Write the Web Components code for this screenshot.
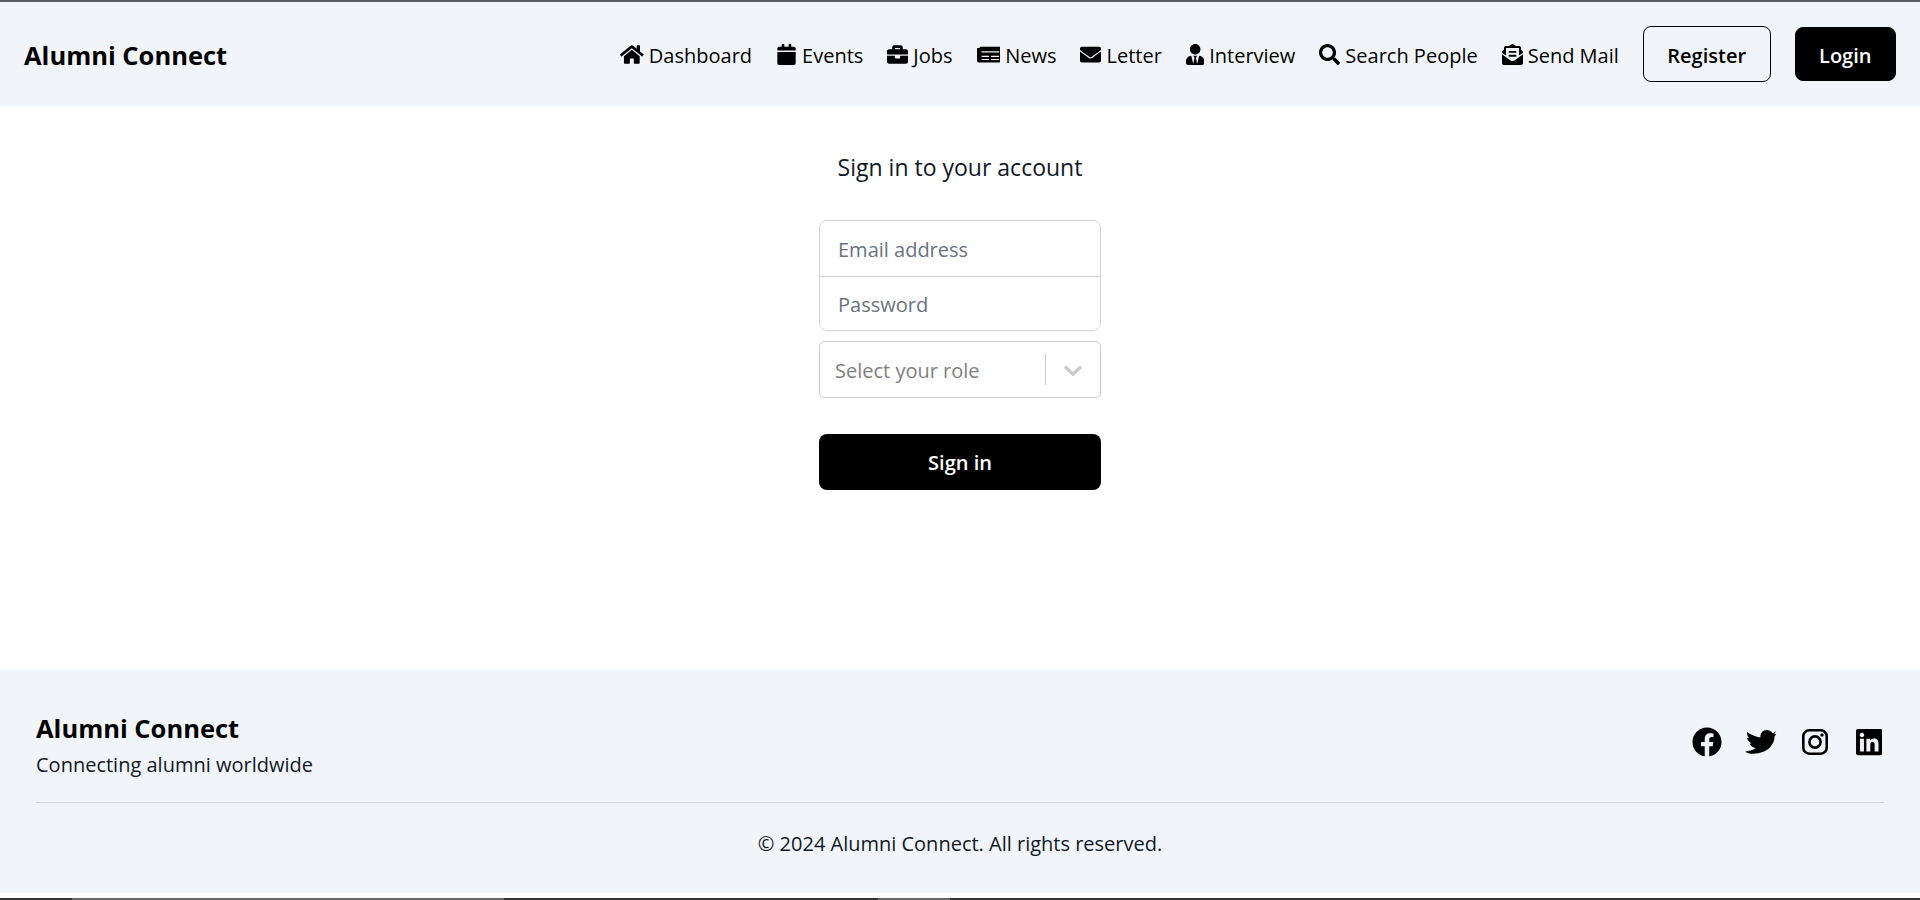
<!DOCTYPE html>
<html lang="en">
<head>
<meta charset="utf-8">
<title>Alumni Connect</title>
<style>
  html, body { margin: 0; height: 100%; }
  body {
    height: 900px;
    overflow: hidden;
    display: flex;
    flex-direction: column;
    background: #fff;
    color: #000;
    font-family: "Open Sans", "Noto Sans", sans-serif;
    font-size: 20px;
  }
  .screen-top { height: 2px; background: #5a5d63; flex: none; }
</style>
</head>
<body>
<div class="screen-top"></div>
<site-header>
  <nav-link icon="home">Dashboard</nav-link>
  <nav-link icon="calendar">Events</nav-link>
  <nav-link icon="briefcase">Jobs</nav-link>
  <nav-link icon="newspaper">News</nav-link>
  <nav-link icon="envelope">Letter</nav-link>
  <nav-link icon="user-tie">Interview</nav-link>
  <nav-link icon="search">Search People</nav-link>
  <nav-link icon="envelope-open">Send Mail</nav-link>
  <header-button>Register</header-button>
  <header-button primary>Login</header-button>
</site-header>
<login-form></login-form>
<site-footer></site-footer>
<screen-edge></screen-edge>

<script>
// [viewBox width, path, viewBox height (512 if left out)]
const ICONS = {
  home: [576, "M280.37 148.26L96 300.11V464a16 16 0 0 0 16 16l112.06-.29a16 16 0 0 0 15.92-16V368a16 16 0 0 1 16-16h64a16 16 0 0 1 16 16v95.64a16 16 0 0 0 16 16.05L464 480a16 16 0 0 0 16-16V300L295.67 148.26a12.19 12.19 0 0 0-15.3 0zM571.6 251.47L488 182.56V44.05a12 12 0 0 0-12-12h-56a12 12 0 0 0-12 12v72.61L318.47 43a48 48 0 0 0-61 0L4.34 251.47a12 12 0 0 0-1.6 16.9l25.5 31A12 12 0 0 0 45.15 301l235.22-193.74a12.19 12.19 0 0 1 15.3 0L530.9 301a12 12 0 0 0 16.9-1.6l25.5-31a12 12 0 0 0-1.7-16.93z"],
  calendar: [512, "M44 192h424c6.6 0 12 5.4 12 12v260c0 26.5-21.5 48-48 48H80c-26.5 0-48-21.5-48-48V204c0-6.6 5.4-12 12-12zm436-44v-36c0-26.5-21.5-48-48-48h-60V12c0-6.6-5.4-12-12-12h-40c-6.6 0-12 5.4-12 12v52H204V12c0-6.6-5.4-12-12-12h-40c-6.6 0-12 5.4-12 12v52H80C53.5 64 32 85.5 32 112v36c0 6.6 5.4 12 12 12h424c6.6 0 12-5.4 12-12z"],
  briefcase: [512, "M320 336c0 8.84-7.16 16-16 16h-96c-8.84 0-16-7.16-16-16v-48H0v144c0 25.6 22.4 48 48 48h416c25.6 0 48-22.4 48-48V288H320v48zm144-208h-80V80c0-25.6-22.4-48-48-48H176c-25.6 0-48 22.4-48 48v48H48c-25.6 0-48 22.4-48 48v80h512v-80c0-25.6-22.4-48-48-48zm-144 0H192V96h128v32z"],
  newspaper: [576, "M88 64h464c13.3 0 24 10.7 24 24v336c0 13.3-10.7 24-24 24H40c-22 0-40-18-40-40V120c0-13.3 10.7-24 24-24h40v-8c0-13.3 10.7-24 24-24zM112 176v30h424v-30zM112 288v26h180v-26zM340 288v26h196v-26zM112 364v26h180v-26zM340 364v26h196v-26z"],
  envelope: [512, "M502.3 190.8c3.9-3.1 9.7-.2 9.7 4.7V400c0 26.5-21.5 48-48 48H48c-26.5 0-48-21.5-48-48V195.6c0-5 5.7-7.8 9.7-4.7 22.4 17.4 52.1 39.5 154.1 113.6 21.1 15.4 56.7 47.8 92.2 47.6 35.7.3 72-32.8 92.3-47.6 102-74.1 131.6-96.3 154-113.7zM256 320c23.2.4 56.6-29.2 73.4-41.4 132.7-96.3 142.8-104.7 173.4-128.7 5.8-4.5 9.2-11.5 9.2-18.9v-19c0-26.5-21.5-48-48-48H48C21.5 64 0 85.5 0 112v19c0 7.4 3.4 14.3 9.2 18.9 30.6 23.9 40.7 32.4 173.4 128.7 16.8 12.2 50.2 41.8 73.4 41.4z"],
  "user-tie": [448, "M224 256c70.7 0 128-57.3 128-128S294.7 0 224 0 96 57.3 96 128s57.3 128 128 128zm95.8 32.6L272 480l-32-136 32-56h-96l32 56-32 136-47.8-191.4C56.9 292 0 350.3 0 422.4V464c0 26.5 21.5 48 48 48h352c26.5 0 48-21.5 48-48v-41.6c0-72.1-56.9-130.4-128.2-133.8z"],
  search: [512, "M505 442.7L405.3 343c-4.5-4.5-10.6-7-17-7H372c27.6-35.3 44-79.7 44-128C416 93.1 322.9 0 208 0S0 93.1 0 208s93.1 208 208 208c48.3 0 92.7-16.4 128-44v16.3c0 6.4 2.5 12.5 7 17l99.7 99.7c9.4 9.4 24.6 9.4 33.9 0l28.3-28.3c9.4-9.4 9.4-24.6.1-34zM208 336c-70.7 0-128-57.2-128-128 0-70.7 57.2-128 128-128 70.7 0 128 57.2 128 128 0 70.7-57.2 128-128 128z"],
  "envelope-open": [512, "M176 216h160c8.84 0 16-7.16 16-16v-16c0-8.84-7.16-16-16-16H176c-8.84 0-16 7.16-16 16v16c0 8.84 7.16 16 16 16zm-16 80c0 8.84 7.16 16 16 16h160c8.84 0 16-7.16 16-16v-16c0-8.84-7.16-16-16-16H176c-8.84 0-16 7.16-16 16v16zm96 121.13c-16.42 0-32.84-5.06-46.86-15.19L0 250.86V464c0 26.51 21.49 48 48 48h416c26.51 0 48-21.49 48-48V250.86L302.86 401.94c-14.02 10.12-30.44 15.19-46.86 15.19zm237.61-254.18c-8.85-6.94-17.24-13.47-29.61-22.81V96c0-26.51-21.49-48-48-48h-77.55c-3.04-2.2-5.87-4.26-9.04-6.56C312.6 29.17 279.2-.35 256 0c-23.2-.35-56.59 29.17-73.41 41.44-3.17 2.3-6 4.36-9.04 6.56H96c-26.51 0-48 21.49-48 48v44.14c-12.37 9.33-20.76 15.87-29.61 22.81A47.995 47.995 0 0 0 0 200.72v10.65l96 69.35V96h320v184.72l96-69.35v-10.65c0-14.74-6.78-28.67-18.39-37.77z"],
  facebook: [512, "M504 256C504 119 393 8 256 8S8 119 8 256c0 123.78 90.69 226.38 209.25 245V327.69h-63V256h63v-54.64c0-62.15 37-96.48 93.67-96.48 27.14 0 55.52 4.84 55.52 4.84v61h-31.28c-30.8 0-40.41 19.12-40.41 38.73V256h68.78l-11 71.69h-57.78V501C413.31 482.38 504 379.78 504 256z"],
  twitter: [95, "M95 4L84 10C80 2 72 0 66 0C54 0 46 10 47 22C34 22 18 14 6 6C6 14 8 20 12 24L6 24C8 32 14 38 20 40L14 42C18 50 26 54 32 55C24 62 12 64 0 66C14 74 28 73 40 71C72 66 90 42 90 20L95 12L88 13Z", 73],
  linkedin: [448, "M416 32H31.9C14.3 32 0 46.5 0 64.3v383.4C0 465.5 14.3 480 31.9 480H416c17.6 0 32-14.5 32-32.3V64.3c0-17.8-14.4-32.3-32-32.3zM135.4 416H69V202.2h66.5V416zm-33.2-243c-21.3 0-38.5-17.3-38.5-38.5S80.9 96 102.2 96c21.2 0 38.5 17.3 38.5 38.5 0 21.3-17.2 38.5-38.5 38.5zm282.1 243h-66.4V312c0-24.8-.5-56.7-34.5-56.7-34.6 0-39.9 27-39.9 54.9V416h-66.4V202.2h63.7v29.2h.9c8.9-16.8 30.6-34.5 62.9-34.5 67.2 0 79.7 44.3 79.7 101.9V416z"]
};

const INSTAGRAM = `<svg xmlns="http://www.w3.org/2000/svg" viewBox="0 0 26 26" width="26" height="26" fill="none" stroke="currentColor" stroke-width="2.6"><rect x="1.3" y="1.3" width="23.4" height="23.4" rx="6"/><circle cx="13" cy="13" r="5.6"/><circle cx="20" cy="6" r="1.7" fill="currentColor" stroke="none"/></svg>`;

function iconSvg(name, size) {
  const [w, d, h = 512] = ICONS[name];
  const fillRule = name === "newspaper" ? ' fill-rule="evenodd"' : "";
  return `<svg xmlns="http://www.w3.org/2000/svg" viewBox="0 0 ${w} ${h}" height="${size}" width="${size * w / h}" fill="currentColor"${fillRule}><path d="${d}"/></svg>`;
}

class SiteHeader extends HTMLElement {
  constructor() {
    super();
    this.attachShadow({ mode: "open" });
    this.shadowRoot.innerHTML = `
      <style>
        :host {
          display: flex;
          flex: none;
          height: 104px;
          align-items: center;
          justify-content: space-between;
          padding: 0 24px;
          background: #f1f5f9;
        }
        .brand { font-size: 25.5px; font-weight: 700; color: #000; padding-top: 2px; }
        nav { display: flex; align-items: center; gap: 24px; }
      </style>
      <div class="brand">Alumni Connect</div>
      <nav><slot></slot></nav>
    `;
  }
}

class NavLink extends HTMLElement {
  constructor() {
    super();
    this.attachShadow({ mode: "open" });
    this.shadowRoot.innerHTML = `
      <style>
        :host { display: inline-flex; align-items: center; gap: 5px; font-size: 20px; color: #000; white-space: nowrap; }
        svg { display: block; flex: none; }
        span { padding-top: 2px; }
      </style>
      ${iconSvg(this.getAttribute("icon"), 21)}
      <span><slot></slot></span>
    `;
  }
}

class HeaderButton extends HTMLElement {
  constructor() {
    super();
    this.attachShadow({ mode: "open" });
    this.shadowRoot.innerHTML = `
      <style>
        :host {
          display: inline-flex;
          align-items: center;
          justify-content: center;
          box-sizing: border-box;
          height: 56px;
          padding: 2px 23.5px 0;
          border: 1px solid #000;
          border-radius: 8px;
          font-size: 20px;
          font-weight: 600;
          color: #000;
        }
        :host([primary]) { height: 54px; background: #000; color: #fff; }
      </style>
      <slot></slot>
    `;
  }
}

class LoginForm extends HTMLElement {
  constructor() {
    super();
    this.attachShadow({ mode: "open" });
    this.shadowRoot.innerHTML = `
      <style>
        :host { display: flex; flex: 1; flex-direction: column; align-items: center; background: #fff; }
        * { box-sizing: border-box; font-family: inherit; }
        h2 { margin: 44px 0 0; height: 34px; line-height: 34px; font-size: 23px; font-weight: 400; color: #111827; }
        form { width: 282px; margin-top: 36px; display: flex; flex-direction: column; }
        .fields { border: 1px solid #d1d5db; border-radius: 8px; overflow: hidden; }
        input {
          display: block;
          width: 100%;
          height: 55px;
          border: 0;
          outline: 0;
          padding: 1px 18px 0;
          font-size: 20px;
          background: #fff;
        }
        input + input { height: 54px; border-top: 1px solid #d1d5db; }
        input::placeholder { color: #6b7280; opacity: 1; }
        .role {
          display: flex;
          align-items: center;
          height: 57px;
          margin-top: 10px;
          border: 1px solid #cccccc;
          border-radius: 5px;
          padding-left: 15px;
          color: #808080;
        }
        .role span { flex: 1; padding-top: 2px; }
        .sep { width: 1px; height: 31px; background: #cccccc; }
        .chev { width: 54px; display: flex; justify-content: center; color: #cccccc; }
        button {
          height: 56px;
          margin-top: 36px;
          padding: 1px 0 0;
          border: 0;
          border-radius: 8px;
          background: #000;
          color: #fff;
          font-size: 20px;
          font-weight: 600;
        }
      </style>
      <h2>Sign in to your account</h2>
      <form onsubmit="return false">
        <div class="fields">
          <input type="email" placeholder="Email address">
          <input type="password" placeholder="Password">
        </div>
        <div class="role">
          <span>Select your role</span>
          <div class="sep"></div>
          <div class="chev"><svg width="30" height="30" viewBox="0 0 20 20" fill="currentColor"><path d="M4.516 7.548c0.436-0.446 1.043-0.481 1.576 0l3.908 3.747 3.908-3.747c0.533-0.481 1.141-0.446 1.574 0 0.436 0.445 0.408 1.197 0 1.615-0.406 0.418-4.695 4.502-4.695 4.502-0.217 0.223-0.502 0.335-0.787 0.335s-0.57-0.112-0.789-0.335c0 0-4.287-4.084-4.695-4.502s-0.436-1.17 0-1.615z"/></svg></div>
        </div>
        <button type="button">Sign in</button>
      </form>
    `;
  }
}

class SiteFooter extends HTMLElement {
  constructor() {
    super();
    this.attachShadow({ mode: "open" });
    const social = [iconSvg("facebook", 30), iconSvg("twitter", 24), INSTAGRAM, iconSvg("linkedin", 30)]
      .map(icon => `<span>${icon}</span>`).join("");
    this.shadowRoot.innerHTML = `
      <style>
        :host { display: block; flex: none; height: 223px; box-sizing: border-box; padding: 41px 36px 0; background: #f1f5f9; color: #111827; }
        .top { display: flex; justify-content: space-between; align-items: flex-start; height: 91px; border-bottom: 1px solid #d1d5db; }
        h3 { margin: 0 0 1px; font-size: 25.5px; font-weight: 700; color: #000; line-height: 35px; }
        p { margin: 0; font-size: 20px; line-height: 36px; }
        .social { display: flex; align-items: center; gap: 24px; margin-top: 16px; color: #000; }
        .social span { display: flex; justify-content: center; align-items: center; width: 30px; height: 30px; }
        svg { display: block; flex: none; }
        .copy { text-align: center; margin-top: 23px; line-height: 36px; }
      </style>
      <div class="top">
        <div class="about">
          <h3>Alumni Connect</h3>
          <p>Connecting alumni worldwide</p>
        </div>
        <div class="social">${social}</div>
      </div>
      <p class="copy">© 2024 Alumni Connect. All rights reserved.</p>
    `;
  }
}

class ScreenEdge extends HTMLElement {
  constructor() {
    super();
    this.attachShadow({ mode: "open" });
    this.shadowRoot.innerHTML = `
      <style>
        :host {
          display: block;
          flex: none;
          height: 2px;
          margin-top: 5px;
          background: linear-gradient(to right,
            #333 0 72px, #666 72px 504px, #333 504px 878px,
            #666 878px 950px, #333 950px);
        }
      </style>
    `;
  }
}

customElements.define("site-header", SiteHeader);
customElements.define("nav-link", NavLink);
customElements.define("header-button", HeaderButton);
customElements.define("login-form", LoginForm);
customElements.define("site-footer", SiteFooter);
customElements.define("screen-edge", ScreenEdge);
</script>
</body>
</html>
